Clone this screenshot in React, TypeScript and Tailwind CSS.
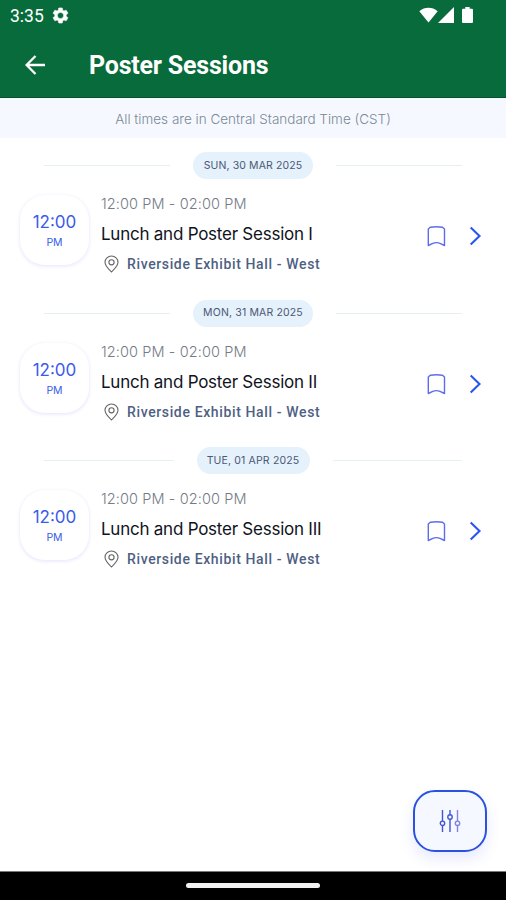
import React from 'react';

interface Session {
  date: string;
  title: string;
  pillClass: string;
}

const SESSIONS: Session[] = [
  { date: 'SUN, 30 MAR 2025', title: 'Lunch and Poster Session I', pillClass: 'w-[120px] tracking-[0.12px]' },
  { date: 'MON, 31 MAR 2025', title: 'Lunch and Poster Session II', pillClass: 'w-[120px] tracking-[0.15px]' },
  { date: 'TUE, 01 APR 2025', title: 'Lunch and Poster Session III', pillClass: 'w-[113px] tracking-[0.15px]' },
];

const StatusBar = () => (
  <div className="h-8 flex items-center pl-[10px] pr-[33px] text-white">
    <span className="font-[Roboto,sans-serif] text-[17.5px] leading-8">3:35</span>
    <svg viewBox="0 0 24 24" className="w-[19px] h-[19px] ml-[7px] -mt-px" fill="currentColor">
      <path d="M19.14 12.94a7 7 0 0 0 0-1.88l2.03-1.58a.5.5 0 0 0 .12-.61l-1.92-3.32a.5.5 0 0 0-.59-.22l-2.39.96a7 7 0 0 0-1.62-.94l-.36-2.54a.5.5 0 0 0-.48-.41h-3.84a.5.5 0 0 0-.47.41l-.36 2.54a7 7 0 0 0-1.62.94l-2.39-.96a.5.5 0 0 0-.59.22L2.74 8.87a.5.5 0 0 0 .12.61l2.03 1.58a7 7 0 0 0 0 1.88l-2.03 1.58a.5.5 0 0 0-.12.61l1.92 3.32c.12.22.37.29.59.22l2.39-.96c.5.38 1.03.7 1.62.94l.36 2.54c.05.24.24.41.48.41h3.84c.24 0 .44-.17.47-.41l.36-2.54a7 7 0 0 0 1.62-.94l2.39.96c.22.08.47 0 .59-.22l1.92-3.32a.5.5 0 0 0-.12-.61zM12 15.9a3.9 3.9 0 1 1 0-7.800 3.9 3.9 0 0 1 0 7.800z" stroke="currentColor" strokeWidth=".7" />
    </svg>
    <div className="ml-auto flex items-center -mt-[2px]">
      <svg viewBox="0 0 19 16" className="w-[19px] h-[16px]" fill="currentColor">
        <path d="M.3 4.200C5.600-.4 13.400-.4 18.700 4.200L9.500 15.500z" />
      </svg>
      <svg viewBox="0 0 16 16" className="w-[16px] h-[16px]" fill="currentColor">
        <path d="M16 0v16H0z" />
      </svg>
      <svg viewBox="0 0 10 16" className="w-[11px] h-[16px] ml-[8px]" fill="currentColor" preserveAspectRatio="none">
        <path d="M3 0h4v1.700h2a1 1 0 0 1 1 1V15a1 1 0 0 1-1 1H1a1 1 0 0 1-1-1V2.700a1 1 0 0 1 1-1h2z" />
      </svg>
    </div>
  </div>
);

const SessionRow = ({ date, title, pillClass }: Session) => (
  <section className="h-[147.7px]">
    {/* Date divider */}
    <div className="flex items-center px-[44px] gap-[23px]">
      <div className="h-px flex-1 bg-[#e6eff3]" />
      <div className={`${pillClass} h-[27px] rounded-full bg-[#e5f1fb] flex items-center justify-center text-[10.5px] text-[#4b5876] whitespace-nowrap`}>
        {date}
      </div>
      <div className="h-px flex-1 bg-[#e6eff3]" />
    </div>

    <div className="flex pl-5 pr-6 pt-[16px]">
      <div className="w-[69px] h-[70px] shrink-0 rounded-[25px] bg-white shadow-[0_1px_3px_1px_rgba(80,90,240,0.11)] flex flex-col items-center text-[#3a5bea]">
        <span className="mt-[15px] text-[17px] leading-6">12:00</span>
        <span className="mt-[3px] text-[10.5px] leading-3">PM</span>
      </div>

      <div className="ml-3 flex-1 whitespace-nowrap">
        <div className="text-[14.5px] leading-[18px] font-light text-[#747b87] tracking-[0.1px]">12:00 PM - 02:00 PM</div>
        <div className="mt-[10px] text-[17px] leading-[22px] text-[#10131c] tracking-[-0.24px]">{title}</div>
        <div className="mt-[10px] flex items-center pl-[3px]">
          <svg viewBox="0 0 15 18" className="w-[15px] h-[18px]" fill="none" stroke="#646464" strokeWidth="1.1">
            <path d="M7.500 17C6 15.200 1 11.300 1 7.200a6.500 6.200 0 0 1 13 0C14 11.300 9 15.200 7.500 17z" />
            <circle cx="7.500" cy="7.300" r="2.600" />
          </svg>
          <span className="ml-2 font-[Roboto,sans-serif] text-[14px] leading-[18px] font-medium text-[#4f5f82] tracking-[0.63px]">
            Riverside Exhibit Hall - West
          </span>
        </div>
      </div>

      <div className="flex items-start pt-[30px]">
        <svg viewBox="0 0 20 22" className="w-[20px] h-[22px]" fill="none" stroke="#5c6cec" strokeWidth="1.4" strokeLinejoin="round">
          <path d="M2.300 20.500V4L4.300 2.200Q10.500 1.200 16.500 2.200L18.500 4V20.500L14 18.300Q10.400 16.900 6.800 18.300z" />
        </svg>
        <svg viewBox="0 0 13 20" className="w-[13px] h-[20px] ml-[23px] mt-px" fill="none" stroke="#2a55ee" strokeWidth="2.1">
          <path d="M1.700 1.600L10.500 10L1.700 18.400" />
        </svg>
      </div>
    </div>
  </section>
);

const App = () => {
  return (
    <div className="w-[506px] h-[900px] flex flex-col bg-white overflow-hidden font-[Inter,sans-serif]">
      <header className="h-[98px] shrink-0 bg-[#086b3b] border-b border-[#075127]">
        <StatusBar />
        <div className="flex items-center h-[66px] pl-[25px] text-white">
          <svg viewBox="0 0 21 20" className="w-[21px] h-[20px] -mt-px" fill="none" stroke="currentColor" strokeWidth="2.300">
            <path d="M20 10H2M10.500 1L1.600 10l8.900 9" />
          </svg>
          <h1 className="ml-[43px] mt-[2px] font-[Roboto,sans-serif] text-[25px] leading-8 font-bold tracking-[-0.2px]">Poster Sessions</h1>
        </div>
      </header>

      <div className="h-10 shrink-0 bg-[#f5f9ff] flex items-center justify-center pt-[2px] text-[13.5px] font-light text-[#7b8796] whitespace-nowrap">
        All times are in Central Standard Time (CST)
      </div>

      <main className="flex-1 flex flex-col pt-[14px]">
        {SESSIONS.map((session) => (
          <SessionRow key={session.title} {...session} />
        ))}

        {/* Filter button */}
        <button className="mt-auto mb-[19px] mr-[19px] self-end w-[74px] h-[62px] rounded-[22px] border-2 border-[#2b52df] bg-[#f5f9ff] shadow-[0_7px_14px_rgba(70,90,250,0.13)] flex items-center justify-center">
          <svg viewBox="0 0 22 24" className="w-[22px] h-[24px]" fill="none" stroke="#4055d2" strokeWidth="1.400">
            <path d="M3.500 1v11.100M3.500 16.500V23M11 1v4.800M11 10.200V23" />
            <circle cx="3.500" cy="14.300" r="2.200" />
            <circle cx="11" cy="8" r="2.200" />
            <g stroke="#7f83de">
              <path d="M18.500 1v11.100M18.500 16.500V23" />
              <circle cx="18.500" cy="14.300" r="2.200" />
            </g>
          </svg>
        </button>
      </main>

      <footer className="h-[29px] shrink-0 bg-black border-t border-[#777] flex items-start justify-center pt-[11px]">
        <div className="w-[134px] h-[5px] rounded-full bg-[#f1f1f1]" />
      </footer>
    </div>
  );
};

export default App;
